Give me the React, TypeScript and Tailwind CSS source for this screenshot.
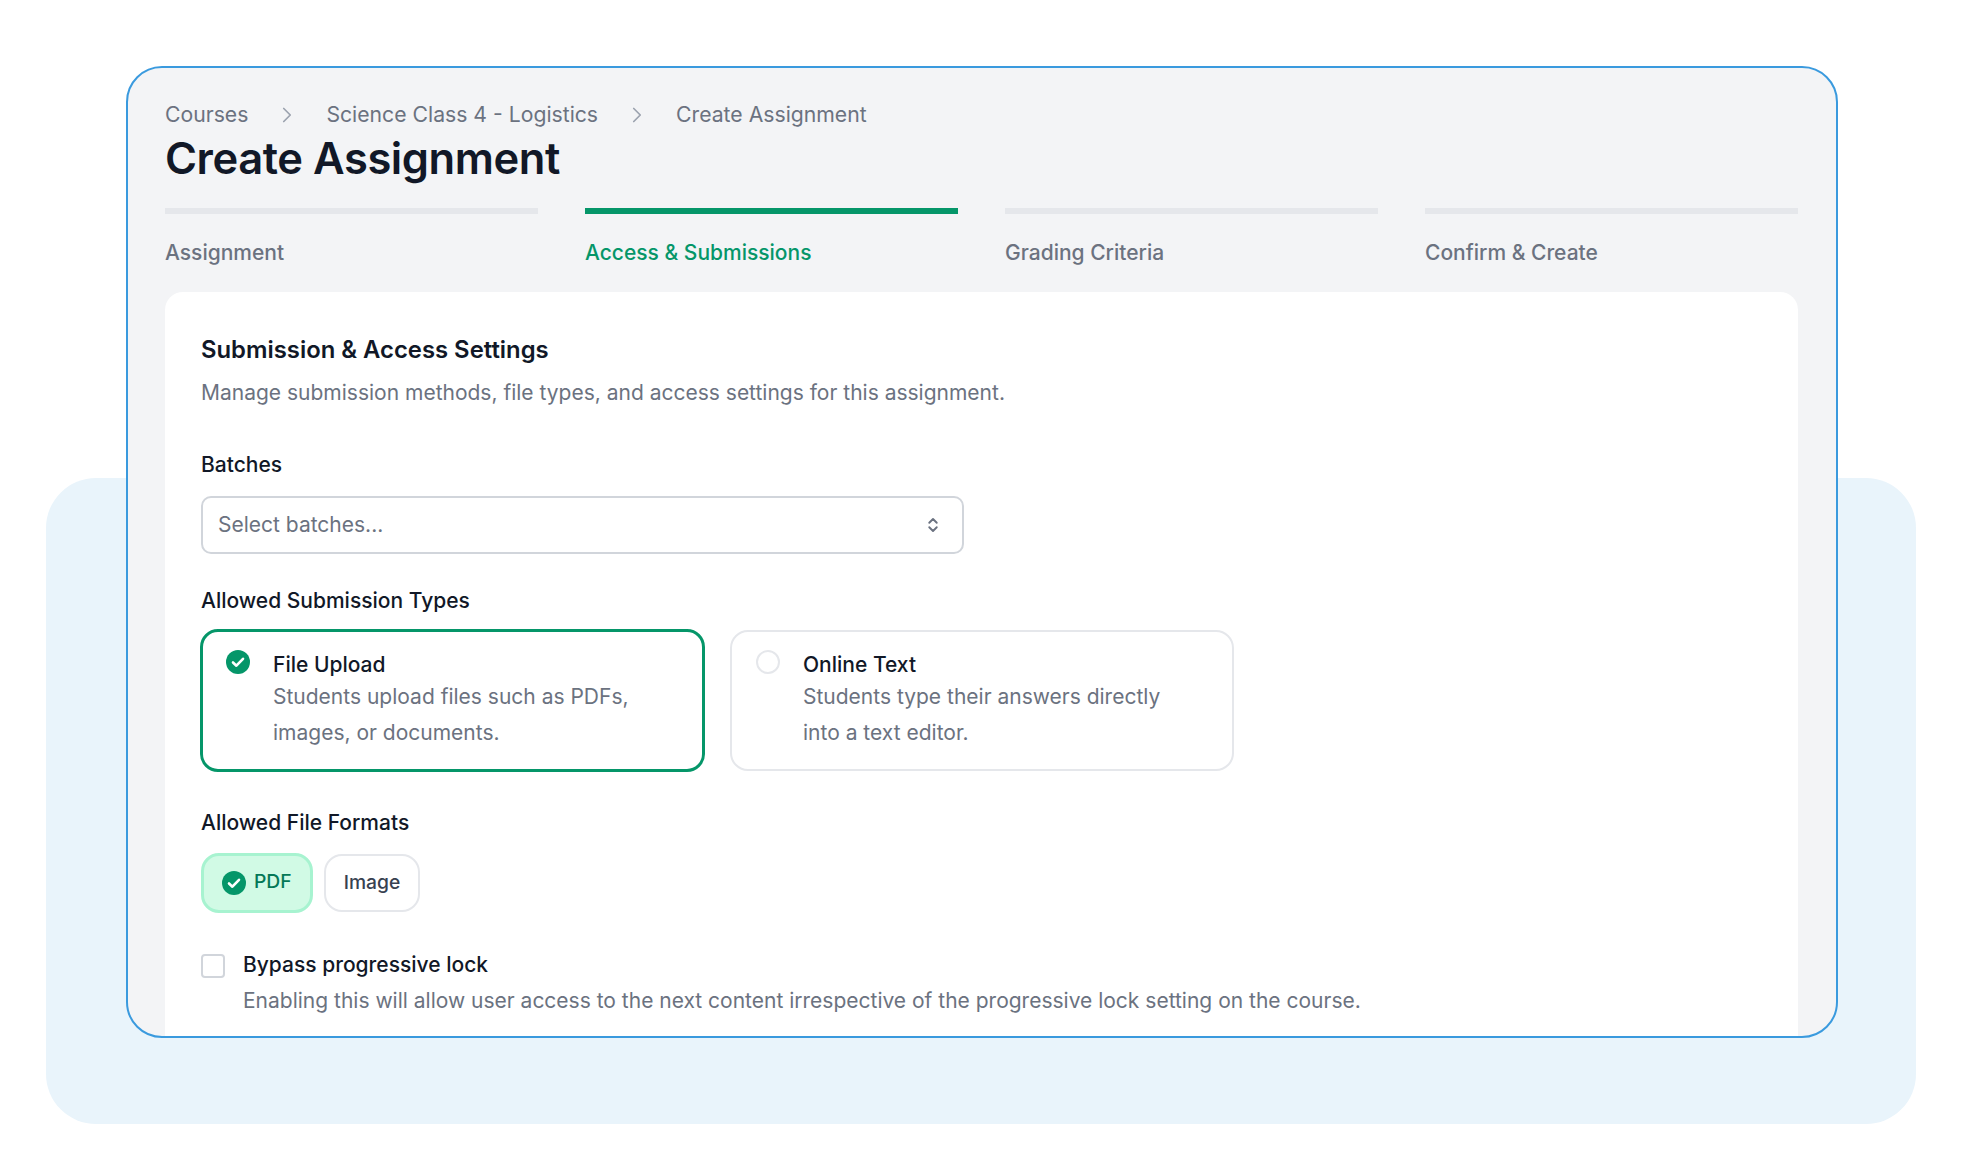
import { ChevronRight, ChevronsUpDown } from "lucide-react";

function CheckCircle({ size = 24 }: { size?: number }) {
  return (
    <svg width={size} height={size} viewBox="0 0 24 24" className="shrink-0">
      <circle cx="12" cy="12" r="12" fill="#059669" />
      <path d="M7 12.5l3.4 3.2L17 8.8" fill="none" stroke="#fff" strokeWidth="2.6" strokeLinecap="round" strokeLinejoin="round" />
    </svg>
  );
}

const tabs = [
  { label: "Assignment", active: false },
  { label: "Access & Submissions", active: true },
  { label: "Grading Criteria", active: false },
  { label: "Confirm & Create", active: false },
];

export default function App() {
  return (
    <div className="relative w-[1964px] h-[1174px] overflow-hidden bg-white pt-[66px] pl-[126px] font-['Inter',sans-serif]">
      <div className="absolute left-[46px] top-[478px] w-[1870px] h-[646px] rounded-[50px] bg-[#e9f4fb]" />
      <div className="relative w-[1712px] h-[972px] overflow-hidden rounded-[36px] border-2 border-[#3a9ade] bg-[#f3f4f6] pt-[33px] pl-[37px] pr-[38px]">
        <div className="flex items-center h-[28px] text-[21.2px] text-[#6b7280]">
          <span>Courses</span>
          <ChevronRight className="ml-[26px] mr-[26px] w-[26px] h-[26px] text-[#9ca3af]" strokeWidth={1.6} />
          <span>Science Class 4 - Logistics</span>
          <ChevronRight className="ml-[26px] mr-[26px] w-[26px] h-[26px] text-[#9ca3af]" strokeWidth={1.6} />
          <span>Create Assignment</span>
        </div>
        <h1 className="mt-[6px] h-[46px] text-[43.5px] leading-[46px] font-semibold tracking-[-0.01em] text-[#111827]">Create Assignment</h1>
        <div className="mt-[27px] grid grid-cols-4 gap-[47px]">
          {tabs.map((t) => (
            <div key={t.label}>
              <div className={t.active ? "h-[6px] bg-[#059669]" : "h-[6px] bg-[#e5e7eb]"} />
              <div className={t.active ? "mt-[25px] text-[21px] leading-[28px] font-medium text-[#059669]" : "mt-[25px] text-[21px] leading-[28px] font-medium text-[#6b7280]"}>
                {t.label}
              </div>
            </div>
          ))}
        </div>
        <div className="mt-[25px] h-[800px] rounded-[18px] bg-white pt-[42px] pl-[36px]">
          <h2 className="text-[23.85px] leading-[32px] font-semibold text-[#111827]">Submission &amp; Access Settings</h2>
          <p className="mt-[13px] text-[21px] leading-[28px] text-[#6b7280]">Manage submission methods, file types, and access settings for this assignment.</p>

          <div className="mt-[44px] text-[21px] leading-[28px] font-medium text-[#111827]">Batches</div>
          <div className="mt-[17px] flex items-center justify-between w-[763px] h-[58px] rounded-[10px] border-2 border-[#d1d5db] pl-[15px] pr-[20px] text-[21px] text-[#6b7280]">
            <span>Select batches...</span>
            <ChevronsUpDown className="w-[18px] h-[18px] text-[#6b7280]" strokeWidth={2.5} />
          </div>

          <div className="mt-[33px] text-[21px] leading-[28px] font-medium text-[#111827]">Allowed Submission Types</div>
          <div className="mt-[14px] -ml-[1px] flex gap-[25px]">
            <div className="flex w-[505px] h-[143px] gap-[23px] rounded-[18px] border-[3px] border-[#059669] pt-[18px] pl-[23px]">
              <CheckCircle />
              <div>
                <div className="text-[21px] leading-[30px] font-medium text-[#111827]">File Upload</div>
                <div className="-mt-[1px] text-[21px] leading-[35.5px] text-[#6b7280]">
                  Students upload files such as PDFs,
                  <br />
                  images, or documents.
                </div>
              </div>
            </div>
            <div className="flex w-[504px] h-[141px] mt-[1px] gap-[23px] rounded-[18px] border-2 border-[#e5e7eb] pt-[18px] pl-[24px]">
              <div className="w-[24px] h-[24px] shrink-0 rounded-full border-2 border-[#e5e7eb]" />
              <div>
                <div className="text-[21px] leading-[30px] font-medium text-[#111827]">Online Text</div>
                <div className="-mt-[1px] text-[21px] leading-[35.5px] text-[#6b7280]">
                  Students type their answers directly
                  <br />
                  into a text editor.
                </div>
              </div>
            </div>
          </div>

          <div className="mt-[37px] text-[21px] leading-[28px] font-medium text-[#111827]">Allowed File Formats</div>
          <div className="mt-[16px] flex items-center gap-[11px]">
            <div className="flex items-center gap-[8px] h-[60px] w-[112px] rounded-[18px] border-[3px] border-[#a7f3d0] bg-[#d1fae5] pl-[18px] text-[19.3px] font-medium text-[#047857]">
              <CheckCircle />
              <span className="-mt-[3px]">PDF</span>
            </div>
            <div className="flex items-center justify-center h-[58px] w-[96px] rounded-[18px] border-2 border-[#e5e7eb] text-[19.3px] font-medium text-[#374151]">
              <span className="-mt-[2px]">Image</span>
            </div>
          </div>

          <div className="mt-[38px] flex gap-[18px]">
            <div className="mt-[3px] w-[24px] h-[24px] shrink-0 rounded-[4px] border-2 border-[#d1d5db]" />
            <div>
              <div className="text-[21px] leading-[28px] font-medium text-[#111827]">Bypass progressive lock</div>
              <div className="mt-[8px] text-[21px] leading-[28px] text-[#6b7280]">Enabling this will allow user access to the next content irrespective of the progressive lock setting on the course.</div>
            </div>
          </div>
        </div>
      </div>
    </div>
  );
}
